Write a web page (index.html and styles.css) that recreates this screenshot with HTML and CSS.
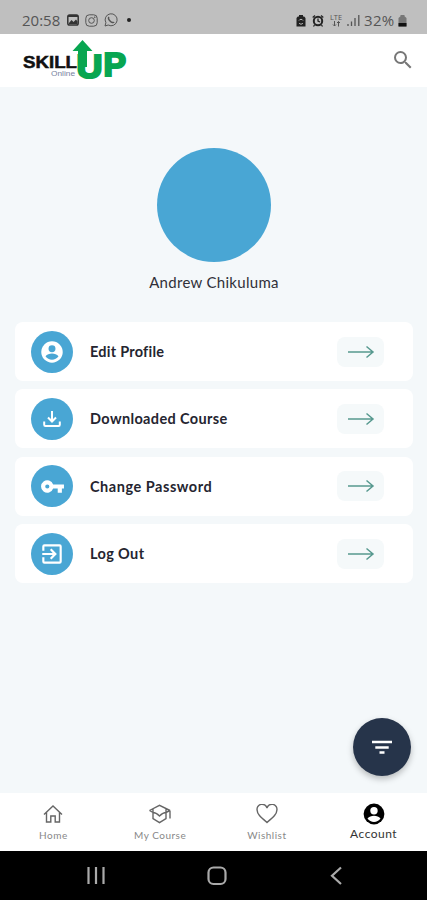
FILE: index.html
```html
<!DOCTYPE html>
<html lang="en">
<head>
    <meta charset="UTF-8">
    <meta name="viewport" content="width=device-width, initial-scale=1.0">
    <title>SkillUp Online - Account</title>
    <link rel="stylesheet" href="styles.css">
</head>
<body>

<div class="status-bar">
    <div class="status-left">
        <span class="clock">20:58</span>
        <svg width="12" height="12" viewBox="0 0 12 12"><rect x=".8" y="1" width="10.4" height="10" rx="1.8" fill="none" stroke="#333" stroke-width="1.5"/><path d="M1 3h10V1H1zM2 9l2.500-3 2 2L9 5.500l1.500 2V10H2z" fill="#333"/></svg>
        <svg width="13" height="13" viewBox="0 0 13 13" fill="none" stroke="#555"><rect x=".8" y=".8" width="11.400" height="11.400" rx="3.500"/><circle cx="6.500" cy="6.500" r="2.800"/><circle cx="9.800" cy="3.200" r=".4"/></svg>
        <svg width="14" height="14" viewBox="0 0 14 14" fill="none" stroke="#555"><path d="M1 13l.9-3.300A6 6 0 1 1 4.200 12z"/><path d="M5 4c-1 1 0 3 1.300 4.300S9.500 10 10 9" stroke-width="1.500"/></svg>
        <span class="status-dot"></span>
    </div>
    <div class="status-right">
        <svg class="saver" width="10" height="13" viewBox="0 0 10 13"><path d="M3 1h4v1.500h1.200L9.500 4v8.500H.5V4l1.300-1.500H3z" fill="#222"/><path d="M3 6.500a2.300 2.300 0 0 1 4 0M7 9a2.300 2.300 0 0 1-4 0" fill="none" stroke="#bbb"/></svg>
        <svg class="alarm" width="12" height="13" viewBox="0 0 12 13"><circle cx="6" cy="7" r="4.200" fill="none" stroke="#222" stroke-width="2"/><path d="M.7 3.500L3 1.500M11.300 3.500L9 1.500M2.500 11L1.500 12.500M9.500 11l1 1.500M6 4.500V7l2 1" fill="none" stroke="#222" stroke-width="1.300"/></svg>
        <svg class="lte" width="13" height="13" viewBox="0 0 13 13"><text x="0" y="6" font-size="7" textLength="12" lengthAdjust="spacingAndGlyphs">LTE</text><path d="M4.500 7v5M3 10.500L4.500 12 6 10.500M8.500 12.500v-5M7 9l1.500-1.500L10 9" fill="none" stroke="#555"/></svg>
        <svg class="signal" width="13" height="12" viewBox="0 0 13 12" fill="none" stroke="#555" stroke-width="1.300"><path d="M1 10v2M4.500 7.500V12M8 4v8M11.800 1v11"/></svg>
        <span class="percent">32%</span>
        <svg width="9" height="13" viewBox="0 0 9 13"><path d="M2.500 1h4v1.300L8.500 4v8.500h-8V4l2-1.700z" fill="#777"/><path d="M.5 9h8v3.500h-8z" fill="#111"/></svg>
    </div>
</div>

<header class="header">
    <svg class="logo" width="106" height="49" viewBox="0 0 106 49">
        <text class="logo-skill" x="0" y="29.500" textLength="54" lengthAdjust="spacingAndGlyphs">SKILL</text>
        <text class="logo-online" x="28" y="37.500" textLength="24" lengthAdjust="spacingAndGlyphs">Online</text>
        <text class="logo-up" x="53.500" y="40" textLength="26" lengthAdjust="spacingAndGlyphs">U</text>
        <text class="logo-up" x="80.500" y="37.700" textLength="22.500" lengthAdjust="spacingAndGlyphs">P</text>
        <path d="M59.500 2L69.500 13H64v16h-9V13h-5.500z" fill="#08a651"/>
    </svg>
    <svg class="search" width="24" height="24" viewBox="0 0 24 24" fill="#777"><path d="M15.500 14h-.79l-.28-.27A6.470 6.470 0 0 0 16 9.500 6.500 6.500 0 1 0 9.500 16c1.610 0 3.090-.59 4.230-1.570l.27.28v.79l5 4.990L20.490 19l-4.990-5zm-6 0C7.010 14 5 11.990 5 9.500S7.010 5 9.500 5 14 7.010 14 9.500 11.990 14 9.500 14z"/></svg>
</header>

<main class="content">
    <div class="avatar"></div>
    <div class="user-name">Andrew Chikuluma</div>

    <div class="menu">
        <div class="menu-item">
            <span class="menu-icon"><svg width="26" height="26" viewBox="0 0 24 24"><circle cx="12" cy="12" r="9.900"/><circle class="cut" cx="12" cy="9" r="3.200"/><path class="cut" d="M6 15.900c1.400-1.800 3.600-2.600 6-2.600s4.600.8 6 2.600c-1.400 2-3.600 3.300-6 3.300s-4.600-1.300-6-3.300z"/></svg></span>
            <span class="menu-label edit">Edit Profile</span>
            <span class="arrow"><svg width="28" height="14" viewBox="0 0 28 14"><path d="M1 7h25M19.500 1.500L26 7l-6.500 5.500"/></svg></span>
        </div>
        <div class="menu-item">
            <span class="menu-icon"><svg width="22" height="22" viewBox="0 0 22 22"><path class="line" d="M11 3v10M7 9.500l4 4 4-4M3.200 13.500v3.300q0 1.200 1.200 1.200h13.200q1.200 0 1.200-1.200v-3.300"/></svg></span>
            <span class="menu-label download">Downloaded Course</span>
            <span class="arrow"><svg width="28" height="14" viewBox="0 0 28 14"><path d="M1 7h25M19.500 1.500L26 7l-6.500 5.500"/></svg></span>
        </div>
        <div class="menu-item">
            <span class="menu-icon"><svg width="25" height="25" viewBox="0 0 24 24"><path d="M12.650 10A6 6 0 1 0 12.650 14H17v4h4v-4h2v-4zM7 14a2 2 0 1 1 0-4 2 2 0 0 1 0 4z"/></svg></span>
            <span class="menu-label password">Change Password</span>
            <span class="arrow"><svg width="28" height="14" viewBox="0 0 28 14"><path d="M1 7h25M19.500 1.500L26 7l-6.500 5.500"/></svg></span>
        </div>
        <div class="menu-item">
            <span class="menu-icon"><svg width="26" height="26" viewBox="0 0 24 24"><path d="M10.090 15.590L11.500 17l5-5-5-5-1.410 1.410L12.670 11H3v2h9.670zM19 3H5a2 2 0 0 0-2 2v4h2V5h14v14H5v-4H3v4a2 2 0 0 0 2 2h14a2 2 0 0 0 2-2V5a2 2 0 0 0-2-2z"/></svg></span>
            <span class="menu-label logout">Log Out</span>
            <span class="arrow"><svg width="28" height="14" viewBox="0 0 28 14"><path d="M1 7h25M19.500 1.500L26 7l-6.500 5.500"/></svg></span>
        </div>
    </div>

    <button class="filter-button">
        <svg width="20" height="15" viewBox="0 0 20 15" fill="none" stroke="#fff" stroke-width="2.600"><path d="M0 2h20M3.300 7.500h13.400M7.500 12.500h5"/></svg>
    </button>
</main>

<nav class="bottom-nav">
    <div class="nav-item">
        <svg width="20" height="20" viewBox="0 0 20 20"><path d="M1 10.500l9-8.500 9 8.500M3.500 8.500V18h4.300v-6h4.400v6h4.300V8.500"/></svg>
        <span class="nav-home">Home</span>
    </div>
    <div class="nav-item">
        <svg width="24" height="20" viewBox="0 0 24 20"><path d="M1.500 6.500L11.500 1.300 22 6.500M1.500 6.500L5 8.500M22 6.500v8M5 5v9.500l6.500 4.200 6.500-4.200V5M5 8.500q3 0 6.500 3.500 3.500-3.500 6.500-3.500l4-2"/></svg>
        <span class="nav-course">My Course</span>
    </div>
    <div class="nav-item">
        <svg width="22" height="20" viewBox="0 0 22 20"><path d="M11 18.500C4 12.500 1.200 10 1.200 6.500A4.900 4.900 0 0 1 11 4a4.900 4.900 0 0 1 9.800 2.500c0 3.500-2.800 6-9.800 12z"/></svg>
        <span class="nav-wishlist">Wishlist</span>
    </div>
    <div class="nav-item active">
        <svg width="22" height="22" viewBox="0 0 22 22"><circle cx="11" cy="11" r="10.400"/><circle class="cut" cx="11" cy="7.800" r="3.700"/><path class="cut" d="M4.500 15.500c1.500-2 4-2.800 6.500-2.800s5 .8 6.500 2.800c-1.500 2.200-4 3.500-6.500 3.500s-5-1.300-6.500-3.500z"/></svg>
        <span class="nav-account">Account</span>
    </div>
</nav>

<div class="system-bar">
    <svg width="18" height="20" viewBox="0 0 18 20"><path d="M1.500 1v17M9 1v17M16.500 1v17"/></svg>
    <svg width="20" height="20" viewBox="0 0 20 20"><rect x="1.500" y="1.500" width="17" height="16.500" rx="5"/></svg>
    <svg width="18" height="20" viewBox="0 0 18 20"><path d="M13 1.500L4 9.700l9 8.300"/></svg>
</div>

</body>
</html>
```
FILE: styles.css
```css
* {
    box-sizing: border-box;
}

body {
    margin: 0;
    height: 900px;
    display: flex;
    flex-direction: column;
    overflow: hidden;
    font-family: Lato, sans-serif;
    background-color: #f4f8fa;
}

svg {
    display: block;
    flex: none;
}

.status-bar {
    height: 34px;
    padding: 6px 20px 0 22px;
    display: flex;
    justify-content: space-between;
    background-color: #bfbfbf;
    color: #555;
    font-family: "Open Sans", sans-serif;
    font-size: 15px;
}

.status-left,
.status-right {
    display: flex;
    align-items: center;
    height: 28px;
}

.status-left {
    gap: 6px;
}

.clock {
    width: 39px;
}

.status-dot {
    width: 4px;
    height: 4px;
    margin-left: 3px;
    border-radius: 50%;
    background-color: #222;
}

.saver,
.alarm {
    margin-right: 6px;
}

.lte {
    margin-right: 4px;
    fill: #555;
}

.signal {
    margin-right: 4px;
}

.percent {
    width: 34px;
    letter-spacing: 0.3px;
}

.header {
    height: 53px;
    padding: 4px 12px 0 23px;
    display: flex;
    justify-content: space-between;
    background-color: #fff;
}

.logo {
    overflow: visible;
}

.search {
    margin-top: 10px;
}

.logo-skill {
    font: bold 16px "Liberation Sans", sans-serif;
    fill: #111;
    stroke: #111;
    stroke-width: 0.5px;
}

.logo-online {
    font: 7px "Liberation Sans", sans-serif;
    fill: #7782a0;
}

.logo-up {
    font: bold 33px "Liberation Sans", sans-serif;
    fill: #08a651;
    stroke: #08a651;
    stroke-width: 2.2px;
}

.content {
    position: relative;
    height: 706px;
    padding: 61px 14px 0 15px;
}

.avatar {
    width: 114px;
    height: 114px;
    margin: 0 auto;
    border-radius: 50%;
    background-color: #49a6d4;
}

.user-name {
    margin-top: 9px;
    height: 22px;
    line-height: 22px;
    text-align: center;
    font-size: 15px;
    letter-spacing: 0.3px;
    color: #303038;
}

.menu {
    margin-top: 29px;
    display: flex;
    flex-direction: column;
    gap: 8.4px;
}

.menu-item {
    height: 59px;
    padding: 0 29px 0 16px;
    display: flex;
    align-items: center;
    border-radius: 8px;
    background-color: #fff;
}

.menu-icon {
    width: 42px;
    height: 42px;
    margin-right: 17px;
    display: flex;
    align-items: center;
    justify-content: center;
    border-radius: 50%;
    background-color: #49a6d4;
}

.menu-icon svg {
    fill: #fff;
}

.menu-icon .cut {
    fill: #49a6d4;
}

.menu-icon .line {
    fill: none;
    stroke: #fff;
    stroke-width: 2;
}

.menu-label {
    flex: 1;
    font-size: 14.5px;
    font-weight: 700;
    letter-spacing: 0.37px;
    color: #252530;
}

.menu-label.edit {
    letter-spacing: 0.25px;
}

.menu-label.password {
    letter-spacing: 0.53px;
}

.arrow {
    width: 47px;
    height: 30px;
    display: flex;
    align-items: center;
    justify-content: center;
    border-radius: 8px;
    background-color: #f5f9fa;
}

.arrow path {
    fill: none;
    stroke: #57998f;
    stroke-width: 1.5;
}

.filter-button {
    position: absolute;
    right: 16px;
    bottom: 17px;
    width: 58px;
    height: 58px;
    padding: 0;
    display: flex;
    align-items: center;
    justify-content: center;
    border: none;
    border-radius: 50%;
    background-color: #26344a;
    box-shadow: 0 3px 6px rgba(0, 0, 0, 0.25);
}

.bottom-nav {
    height: 58px;
    display: flex;
    background-color: #fff;
}

.nav-item {
    flex: 1;
    padding-top: 11px;
    display: flex;
    flex-direction: column;
    align-items: center;
    font-size: 10px;
    line-height: 14px;
    letter-spacing: 0.5px;
    color: #888;
}

.nav-item svg {
    fill: none;
    stroke: #666;
    stroke-width: 1.4;
}

.nav-item span {
    margin-top: 4px;
}

.nav-item.active {
    padding-top: 10px;
    font-size: 12px;
    color: #333;
}

.nav-item.active svg {
    fill: #000;
    stroke: none;
}

.nav-item.active .cut {
    fill: #fff;
}

.nav-item.active span {
    margin-top: 2px;
    letter-spacing: 0.5px;
}

.system-bar {
    height: 49px;
    padding: 0 81px 0 87px;
    display: flex;
    align-items: center;
    justify-content: space-between;
    background-color: #000;
}

.system-bar svg {
    fill: none;
    stroke: #aaa;
    stroke-width: 2.2;
}
```
